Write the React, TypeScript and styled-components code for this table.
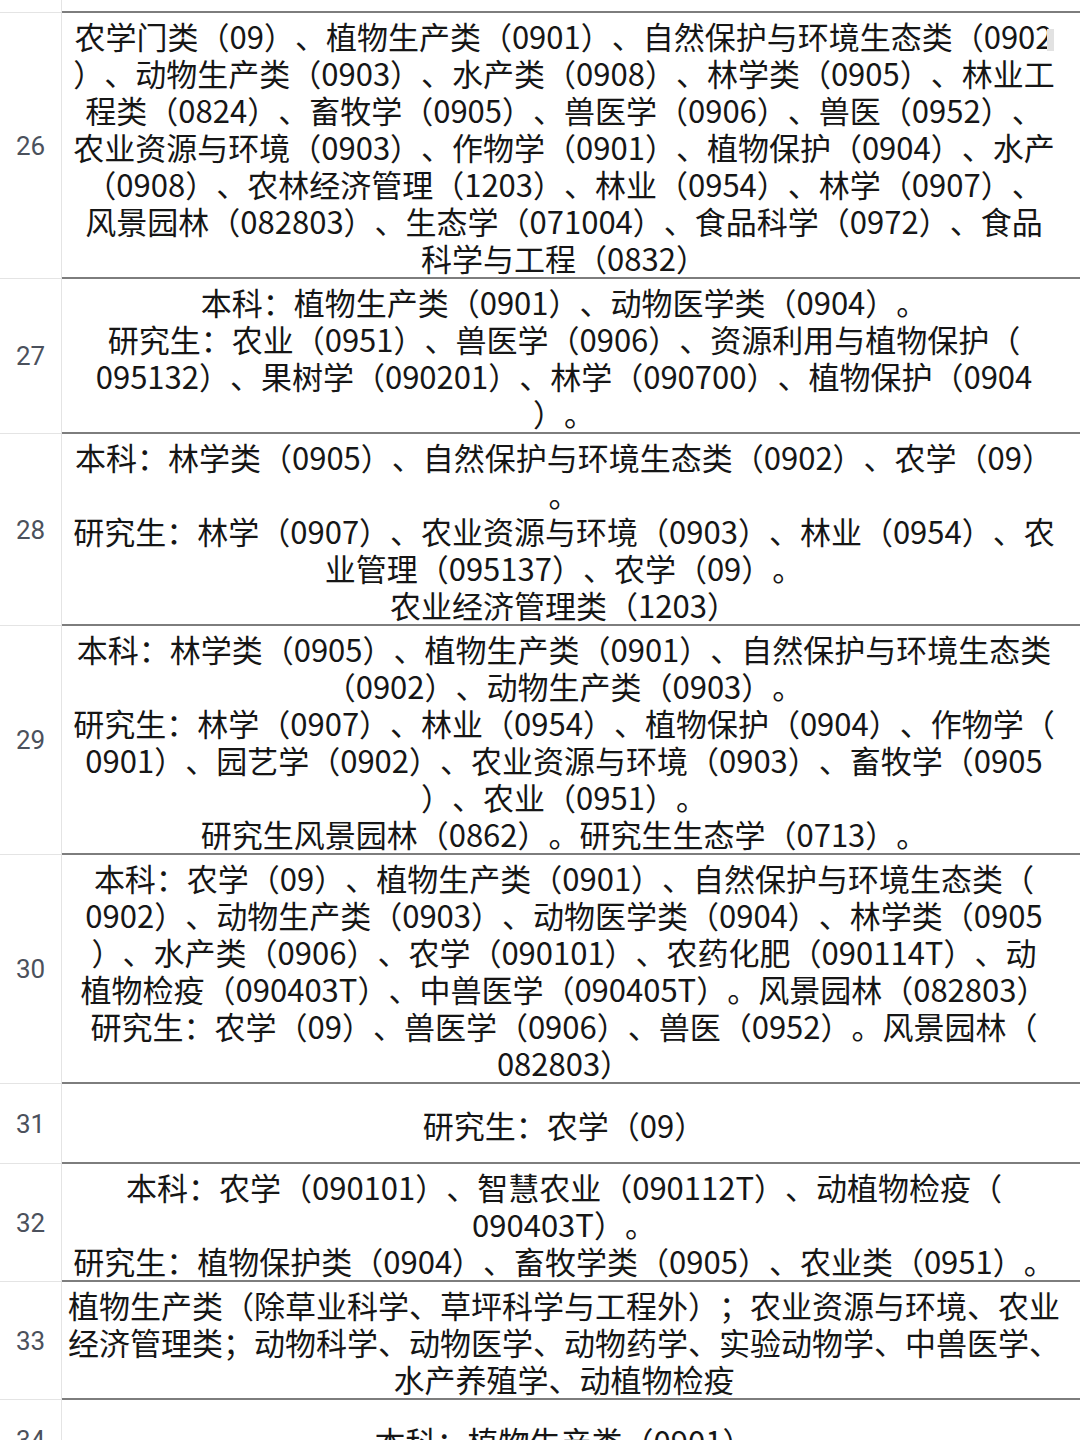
import styled, { createGlobalStyle } from 'styled-components';

const GlobalStyle = createGlobalStyle`
  html, body {
    margin: 0;
    padding: 0;
    background: #ffffff;
  }
  body {
    font-family: "Noto Sans CJK SC", "Noto Sans", sans-serif;
  }
`;

interface MajorRow {
  no: string;
  lines: string[];
}

const rows: MajorRow[] = [
  {
    no: '26',
    lines: [
      '农学门类（09）、植物生产类（0901）、自然保护与环境生态类（0902',
      '）、动物生产类（0903）、水产类（0908）、林学类（0905）、林业工',
      '程类（0824）、畜牧学（0905）、兽医学（0906）、兽医（0952）、',
      '农业资源与环境（0903）、作物学（0901）、植物保护（0904）、水产',
      '（0908）、农林经济管理（1203）、林业（0954）、林学（0907）、',
      '风景园林（082803）、生态学（071004）、食品科学（0972）、食品',
      '科学与工程（0832）',
    ],
  },
  {
    no: '27',
    lines: [
      '本科：植物生产类（0901）、动物医学类（0904）。',
      '研究生：农业（0951）、兽医学（0906）、资源利用与植物保护（',
      '095132）、果树学（090201）、林学（090700）、植物保护（0904',
      '）。',
    ],
  },
  {
    no: '28',
    lines: [
      '本科：林学类（0905）、自然保护与环境生态类（0902）、农学（09）',
      '。',
      '研究生：林学（0907）、农业资源与环境（0903）、林业（0954）、农',
      '业管理（095137）、农学（09）。',
      '农业经济管理类（1203）',
    ],
  },
  {
    no: '29',
    lines: [
      '本科：林学类（0905）、植物生产类（0901）、自然保护与环境生态类',
      '（0902）、动物生产类（0903）。',
      '研究生：林学（0907）、林业（0954）、植物保护（0904）、作物学（',
      '0901）、园艺学（0902）、农业资源与环境（0903）、畜牧学（0905',
      '）、农业（0951）。',
      '研究生风景园林（0862）。研究生生态学（0713）。',
    ],
  },
  {
    no: '30',
    lines: [
      '本科：农学（09）、植物生产类（0901）、自然保护与环境生态类（',
      '0902）、动物生产类（0903）、动物医学类（0904）、林学类（0905',
      '）、水产类（0906）、农学（090101）、农药化肥（090114T）、动',
      '植物检疫（090403T）、中兽医学（090405T）。风景园林（082803）',
      '研究生：农学（09）、兽医学（0906）、兽医（0952）。风景园林（',
      '082803）',
    ],
  },
  {
    no: '31',
    lines: ['研究生：农学（09）'],
  },
  {
    no: '32',
    lines: [
      '本科：农学（090101）、智慧农业（090112T）、动植物检疫（',
      '090403T）。',
      '研究生：植物保护类（0904）、畜牧学类（0905）、农业类（0951）。',
    ],
  },
  {
    no: '33',
    lines: [
      '植物生产类（除草业科学、草坪科学与工程外）；农业资源与环境、农业',
      '经济管理类；动物科学、动物医学、动物药学、实验动物学、中兽医学、',
      '水产养殖学、动植物检疫',
    ],
  },
  {
    no: '34',
    lines: ['本科：植物生产类（0901）'],
  },
];

const Table = styled.div`
  width: 1080px;
  height: 1440px;
  overflow: hidden;
  display: flex;
  flex-direction: column;
`;

const Row = styled.div`
  display: flex;
  align-items: stretch;
  flex: none;
`;

const NumCell = styled.div`
  width: 61px;
  flex: none;
  display: flex;
  align-items: center;
  justify-content: center;
  border-right: 1px solid #e4e4e4;
  border-bottom: 1px solid #e4e4e4;
  font-family: Roboto, "Noto Sans", sans-serif;
  font-size: 26px;
  color: #4b515c;
`;

const ContentCell = styled.div<{ $stub?: boolean }>`
  flex: 1;
  min-width: 0;
  min-height: ${(p) => (p.$stub ? '11px' : '73px')};
  height: ${(p) => (p.$stub ? '11px' : 'auto')};
  box-sizing: content-box;
  padding: ${(p) => (p.$stub ? '0' : '4px 14px 1px 0')};
  display: flex;
  flex-direction: column;
  justify-content: center;
  border-bottom: 2px solid #7d7d7d;
`;

const Line = styled.div`
  white-space: nowrap;
  text-align: center;
  font-size: 31px;
  line-height: 37px;
  height: 37px;
  color: #161616;
  text-spacing-trim: space-all;
  font-feature-settings: "halt" 0, "palt" 0;
`;

const Caret = styled.span`
  display: inline-block;
  width: 7px;
  height: 22px;
  margin-left: -6px;
  vertical-align: -2px;
  background: #e2e2e2;
`;

export default function App() {
  return (
    <Table>
      <GlobalStyle />
      <Row>
        <NumCell />
        <ContentCell $stub />
      </Row>
      {rows.map((row) => (
        <Row key={row.no}>
          <NumCell>{row.no}</NumCell>
          <ContentCell>
            {row.lines.map((line, i) => (
              <Line key={i}>
                {line}
                {row.no === '26' && i === 0 && <Caret />}
              </Line>
            ))}
          </ContentCell>
        </Row>
      ))}
    </Table>
  );
}
